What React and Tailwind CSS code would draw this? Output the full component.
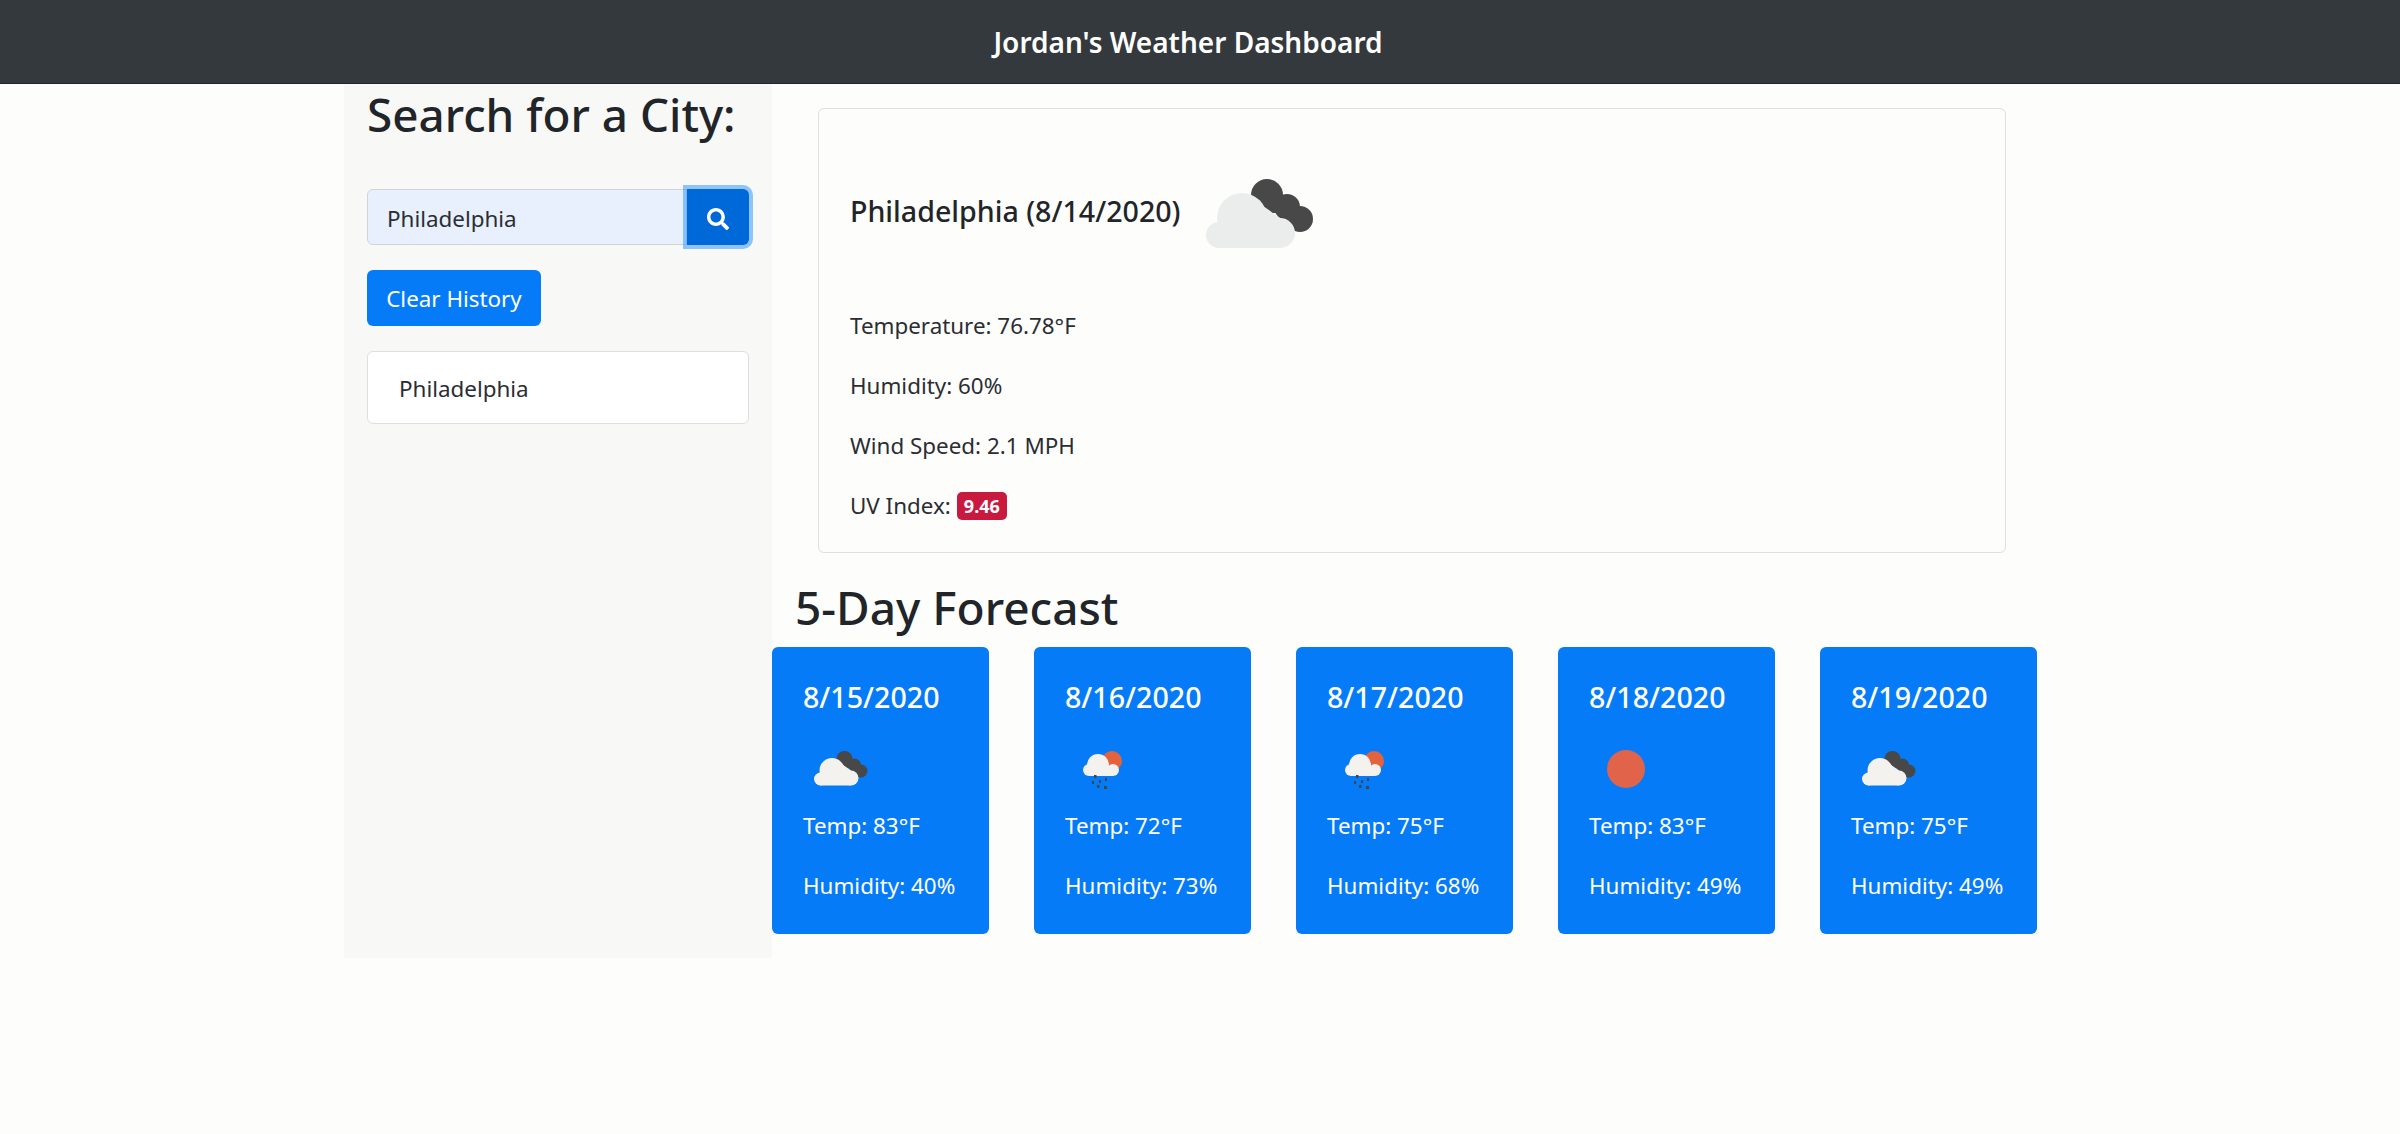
import React from "react";
import { FaSearch } from "react-icons/fa";

const forecast = [
  { date: "8/15/2020", icon: "clouds", temp: "83", humidity: "40" },
  { date: "8/16/2020", icon: "rain", temp: "72", humidity: "73" },
  { date: "8/17/2020", icon: "rain", temp: "75", humidity: "68" },
  { date: "8/18/2020", icon: "sun", temp: "83", humidity: "49" },
  { date: "8/19/2020", icon: "clouds", temp: "75", humidity: "49" },
];

const BrokenClouds = ({ light, className }) => (
  <svg viewBox="0 0 75 75" className={className}>
    {/* dark cloud behind */}
    <g fill="#484848">
      <circle cx="41.5" cy="27" r="8" />
      <circle cx="51.5" cy="33" r="6.5" />
      <circle cx="58" cy="39" r="6.5" />
      <path d="M34 27 L39.5 36 L48 36 L49 41 L55.5 45 L62 40 L54 30 L42 24 Z" />
    </g>
    {/* light cloud in front */}
    <g fill={light}>
      <circle cx="17.5" cy="47" r="6.5" />
      <circle cx="29" cy="38.5" r="12.5" />
      <circle cx="48" cy="46" r="7.5" />
      <path d="M17 41 L36 30 L48 38.5 L48 53.5 L17 53.5 Z" />
    </g>
  </svg>
);

const RainSun = ({ className }) => (
  <svg viewBox="0 0 75 75" className={className}>
    <circle cx="47" cy="29" r="10" fill="#e4633f" />
    <g fill="#f4f2ee">
      <circle cx="24" cy="38" r="6" />
      <circle cx="33" cy="33" r="11" />
      <circle cx="48" cy="38" r="6" />
      <rect x="24" y="34" width="24" height="10" />
    </g>
    <g fill="#3f4650">
      <rect x="29" y="43" width="2.5" height="3" />
      <rect x="27" y="49" width="2" height="3" />
      <rect x="34" y="48" width="2" height="3" />
      <rect x="40" y="46" width="2" height="3" />
      <rect x="32" y="53" width="2.5" height="3" />
      <rect x="39" y="54" width="3" height="3" />
    </g>
  </svg>
);

const Sun = ({ className }) => (
  <svg viewBox="0 0 75 75" className={className}>
    <circle cx="37" cy="37" r="19" fill="#e0634a" />
  </svg>
);

const ForecastIcon = ({ icon }) => {
  if (icon === "clouds") return <BrokenClouds light="#f4f2ee" className="w-[75px] h-[75px]" />;
  if (icon === "rain") return <RainSun className="w-[75px] h-[75px]" />;
  return <Sun className="w-[75px] h-[75px]" />;
};

const App = () => {
  return (
    <div className="min-h-[1134px] bg-[#fdfdfb] font-['Noto_Sans',sans-serif] text-[22.4px] text-[#2a2e33]">
      <header className="h-[84px] bg-[#33393d] border-b border-[#23272b] flex items-center justify-center pr-[24px] pt-[1px]">
        <h1 className="text-[28px] font-semibold text-white">Jordan's Weather Dashboard</h1>
      </header>

      <div className="w-[1712px] mx-auto flex">
        {/* Sidebar */}
        <aside className="w-[428px] h-[874px] bg-[#f8f9f7] px-[23px] flex flex-col">
          <h2 className="h-[62px] flex items-center text-[45.8px] font-medium leading-none text-[#212529] whitespace-nowrap">
            Search for a City:
          </h2>
          <div className="mt-[43px] flex h-[56px]">
            <div className="flex-1 bg-[#e8f0fe] border border-[#ced4da] rounded-l-md pl-[19px] pt-[3px] flex items-center">
              Philadelphia
            </div>
            <button className="w-[62px] bg-[#0069d9] rounded-r-md pt-[3px] flex items-center justify-center ring-[4px] ring-[#268fff]/50">
              <FaSearch className="text-white text-[22px]" />
            </button>
          </div>
          <button className="mt-[25px] w-[174px] h-[56px] bg-[#067bf8] text-white rounded-md pt-[1px]">Clear History</button>
          <div className="mt-[25px] h-[73px] bg-white border border-[#dfdfdf] rounded-md pl-[31px] pt-[2px] flex items-center">
            Philadelphia
          </div>
        </aside>

        {/* Main */}
        <main className="flex-1">
          <section className="ml-[46px] mr-[50px] mt-[24px] h-[445px] border border-[#dfdfdb] rounded-md pl-[31px] flex flex-col">
            <div className="h-[199px] pt-[6px] flex items-center">
              <h5 className="text-[28.6px] font-medium text-[#212529]">Philadelphia (8/14/2020)</h5>
              <BrokenClouds light="#ebecec" className="ml-[3px] mt-[8px] w-[150px] h-[150px]" />
            </div>
            <div className="flex flex-col">
              <p className="h-[36px] mb-[24px] flex items-center">Temperature: 76.78°F</p>
              <p className="h-[36px] mb-[24px] flex items-center">Humidity: 60%</p>
              <p className="h-[36px] mb-[24px] flex items-center">Wind Speed: 2.1 MPH</p>
              <p className="h-[36px] flex items-center">
                UV Index:
                <span className="ml-[6px] bg-[#c9193f] text-white text-[18px] font-bold rounded-[5px] h-[28px] px-[7px] flex items-center">
                  9.46
                </span>
              </p>
            </div>
          </section>

          <h3 className="ml-[23px] h-[94px] pt-[14px] flex items-center text-[46px] font-medium leading-none text-[#212529]">5-Day Forecast</h3>

          <div className="flex gap-[45px]">
            {forecast.map((day) => (
              <div key={day.date} className="w-[217px] h-[287px] bg-[#067bf8] rounded-md text-white pl-[31px] pt-[32px]">
                <h5 className="h-[36px] flex items-center text-[28.6px] font-medium">{day.date}</h5>
                <div className="h-[75px] mt-[17px]">
                  <ForecastIcon icon={day.icon} />
                </div>
                <p className="h-[36px] mt-[1px] flex items-center">Temp: {day.temp}°F</p>
                <p className="h-[36px] mt-[24px] flex items-center">Humidity: {day.humidity}%</p>
              </div>
            ))}
          </div>
        </main>
      </div>
    </div>
  );
};

export default App;
